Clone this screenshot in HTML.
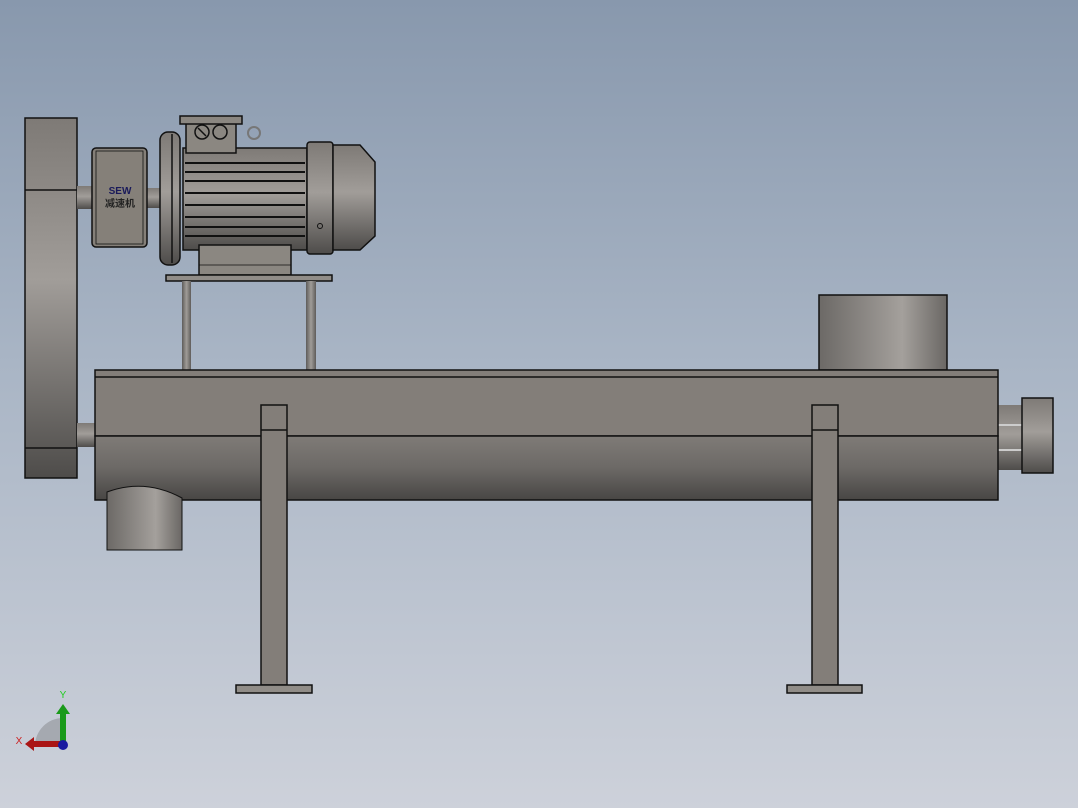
<!DOCTYPE html>
<html><head><meta charset="utf-8"><style>
html,body{margin:0;padding:0;width:1078px;height:808px;overflow:hidden}
body{background:linear-gradient(#8898ad,#a9b5c5 45%,#cdd1da)}
</style></head><body>
<svg width="1078" height="808" viewBox="0 0 1078 808" xmlns="http://www.w3.org/2000/svg">
<defs>
<linearGradient id="v" x1="0" y1="0" x2="0" y2="1"><stop offset="0" stop-color="#7e7a76"/><stop offset=".45" stop-color="#a19d99"/><stop offset="1" stop-color="#4e4c4a"/></linearGradient>
<linearGradient id="lo" x1="0" y1="0" x2="0" y2="1"><stop offset="0" stop-color="#7f7b77"/><stop offset=".5" stop-color="#6c6966"/><stop offset="1" stop-color="#484644"/></linearGradient>
<linearGradient id="h" x1="0" y1="0" x2="1" y2="0"><stop offset="0" stop-color="#6c6966"/><stop offset=".65" stop-color="#a4a09c"/><stop offset="1" stop-color="#6a6764"/></linearGradient>
<linearGradient id="hs" x1="0" y1="0" x2="1" y2="0"><stop offset="0" stop-color="#5e5c5a"/><stop offset=".5" stop-color="#a09c98"/><stop offset="1" stop-color="#5e5c5a"/></linearGradient>
</defs>
<g stroke="#111" stroke-width="1.5">
<!-- pulley box -->
<rect x="25" y="118" width="52" height="360" fill="url(#v)"/>
<line x1="25" y1="190" x2="77" y2="190"/>
<line x1="25" y1="448" x2="77" y2="448"/>
<!-- shafts -->
<rect x="77" y="186" width="16" height="23" fill="url(#v)" stroke-width="0"/>
<rect x="147" y="188" width="14" height="20" fill="url(#v)" stroke-width="0"/>
<rect x="77" y="423" width="19" height="24" fill="url(#v)" stroke-width="0"/>
<!-- reducer -->
<rect x="92" y="148" width="55" height="99" rx="4" fill="#858079"/>
<rect x="96" y="151" width="47" height="93" fill="none" stroke-width=".8"/>
<!-- motor flange -->
<rect x="160" y="132" width="20" height="133" rx="8" fill="url(#v)"/>
<line x1="172" y1="134" x2="172" y2="263"/>
<!-- motor body -->
<rect x="183" y="148" width="124" height="102" fill="url(#v)"/>
<g stroke-width="2">
<line x1="185" y1="163" x2="305" y2="163"/><line x1="185" y1="172" x2="305" y2="172"/>
<line x1="185" y1="181" x2="305" y2="181"/><line x1="185" y1="193" x2="305" y2="193"/>
<line x1="185" y1="205" x2="305" y2="205"/><line x1="185" y1="217" x2="305" y2="217"/>
<line x1="185" y1="227" x2="305" y2="227"/><line x1="185" y1="236" x2="305" y2="236"/>
</g>
<!-- terminal box -->
<rect x="186" y="120" width="50" height="33" fill="#8b8781"/>
<rect x="180" y="116" width="62" height="8" fill="#8b8781"/>
<circle cx="202" cy="132" r="7" fill="none"/><circle cx="220" cy="132" r="7" fill="none"/>
<line x1="198" y1="128" x2="206" y2="136"/>
<circle cx="254" cy="133" r="6" fill="none" stroke="#777" stroke-width="2"/>
<!-- end cap & fan cover -->
<rect x="307" y="142" width="26" height="112" rx="3" fill="url(#v)"/>
<path d="M333 145 L360 145 L375 162 L375 236 L360 250 L333 250 Z" fill="url(#v)"/>
<circle cx="320" cy="226" r="2.5" fill="none" stroke-width="1"/>
<!-- base -->
<rect x="199" y="245" width="92" height="30" fill="#8b8781"/>
<line x1="199" y1="265" x2="291" y2="265" stroke-width=".8"/>
<rect x="166" y="275" width="166" height="6" fill="#918d88"/>
<rect x="182" y="281" width="9" height="89" fill="url(#hs)" stroke-width="0"/>
<rect x="306" y="281" width="10" height="89" fill="url(#hs)" stroke-width="0"/>
<!-- hopper -->
<rect x="819" y="295" width="128" height="75" fill="url(#h)"/>
<!-- right end -->
<rect x="998" y="405" width="24" height="65" fill="url(#v)" stroke-width="0"/>
<line x1="998" y1="425" x2="1022" y2="425" stroke="#ccc" stroke-width="2"/>
<line x1="998" y1="450" x2="1022" y2="450" stroke="#ccc" stroke-width="2"/>
<rect x="1022" y="398" width="31" height="75" fill="url(#v)"/>
<!-- body -->
<rect x="95" y="370" width="903" height="66" fill="#837e79"/>
<rect x="95" y="436" width="903" height="64" fill="url(#lo)"/>
<line x1="95" y1="377" x2="998" y2="377"/>
<!-- outlet -->
<path d="M107 492 Q145 478 182 498 L182 550 L107 550 Z" fill="url(#h)" stroke-width="1"/>
<!-- legs -->
<rect x="261" y="405" width="26" height="280" fill="#837e79"/>
<line x1="261" y1="430" x2="287" y2="430"/>
<rect x="236" y="685" width="76" height="8" fill="#918d88"/>
<rect x="812" y="405" width="26" height="280" fill="#837e79"/>
<line x1="812" y1="430" x2="838" y2="430"/>
<rect x="787" y="685" width="75" height="8" fill="#918d88"/>
</g>
<text x="120" y="194" font-family="Liberation Sans,sans-serif" font-size="10" font-weight="bold" fill="#1a1a5a" text-anchor="middle">SEW</text>
<text x="120" y="207" font-family="'Liberation Sans','Noto Sans CJK SC',sans-serif" font-size="10" font-weight="bold" fill="#222" text-anchor="middle">减速机</text>
<!-- triad -->
<path d="M63 718 A28 28 0 0 0 35 746 L63 746 Z" fill="#a5a9b0"/>
<rect x="60" y="712" width="6" height="34" fill="#1a9a1a"/>
<path d="M56 714 L63 704 L70 714 Z" fill="#1a9a1a"/>
<rect x="32" y="741" width="30" height="6" fill="#aa1515"/>
<path d="M34 737 L25 744 L34 751 Z" fill="#aa1515"/>
<circle cx="63" cy="745" r="5" fill="#1a1aa0"/>
<text x="63" y="698" font-family="Liberation Sans,sans-serif" font-size="10" fill="#2c2" text-anchor="middle">Y</text>
<text x="19" y="744" font-family="Liberation Sans,sans-serif" font-size="10" fill="#c22" text-anchor="middle">X</text>
</svg>
</body></html>
